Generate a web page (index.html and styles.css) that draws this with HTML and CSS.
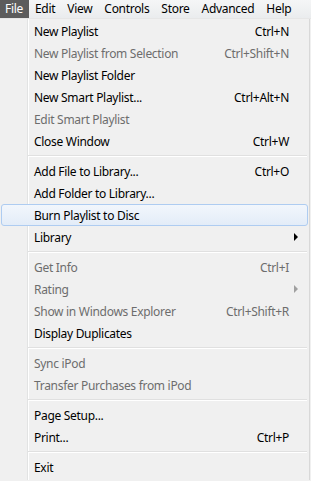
FILE: index.html
```html
<html>
<head>
<title>File menu</title>
<link rel="stylesheet" href="styles.css">
</head>
<body>
<div class="menubar">
  <span class="top open">File</span>
  <span class="top">Edit</span>
  <span class="top">View</span>
  <span class="top">Controls</span>
  <span class="top">Store</span>
  <span class="top">Advanced</span>
  <span class="top">Help</span>
</div>

<div class="menu">
  <div class="item"><span>New Playlist</span><span>Ctrl+N</span></div>
  <div class="item off"><span>New Playlist from Selection</span><span>Ctrl+Shift+N</span></div>
  <div class="item"><span>New Playlist Folder</span></div>
  <div class="item"><span>New Smart Playlist...</span><span>Ctrl+Alt+N</span></div>
  <div class="item off"><span>Edit Smart Playlist</span></div>
  <div class="item"><span>Close Window</span><span>Ctrl+W</span></div>
  <div class="sep"></div>
  <div class="item"><span>Add File to Library...</span><span>Ctrl+O</span></div>
  <div class="item"><span>Add Folder to Library...</span></div>
  <div class="item hot"><span>Burn Playlist to Disc</span></div>
  <div class="item sub"><span>Library</span></div>
  <div class="sep"></div>
  <div class="item off"><span>Get Info</span><span>Ctrl+I</span></div>
  <div class="item off sub"><span>Rating</span></div>
  <div class="item off"><span>Show in Windows Explorer</span><span>Ctrl+Shift+R</span></div>
  <div class="item"><span>Display Duplicates</span></div>
  <div class="sep"></div>
  <div class="item off"><span>Sync iPod</span></div>
  <div class="item off"><span>Transfer Purchases from iPod</span></div>
  <div class="sep"></div>
  <div class="item"><span>Page Setup...</span></div>
  <div class="item"><span>Print...</span><span>Ctrl+P</span></div>
  <div class="sep"></div>
  <div class="item"><span>Exit</span></div>
</div>
</body>
</html>
```

FILE: styles.css
```css
body {
  margin: 0;
  font-family: 'Noto Sans', sans-serif;
  font-size: 12px;
  letter-spacing: -0.3px;
  color: #000;
  background: #f0f0f0;
}
.menubar {
  display: flex;
  height: 18px;
  line-height: 18px;
  background: linear-gradient(#f5f6f7, #eaecee);
  border-bottom: 1px solid #e6e6e6;
}
.top {
  padding: 0 6px;
}
.top.open {
  background: #5c5c5c;
  color: #fff;
  padding: 0 6px 0 5px;
}
.menu {
  width: 309px;
  padding: 1px 0 2px;
  border-right: 1px solid #d8d8d8;
  background: linear-gradient(to right, #f0f0f0 27px, #e2e3e3 27px, #e2e3e3 28px, #fff 28px, #fff 29px, #f0f0f0 29px);
}
.item {
  display: flex;
  justify-content: space-between;
  align-items: center;
  height: 22px;
  padding: 0 18px 0 33px;
  margin: 0 2px 0 1px;
  position: relative;
}
.item.off {
  color: #6d6d6d;
}
.item.hot {
  margin: 0 1px 0 1px;
  padding-right: 19px;
  border: 1px solid #aeccf1;
  border-radius: 3px;
  height: 20px;
  padding-left: 32px;
  background: linear-gradient(#f2f6fc, #e3ecf8);
}
.item.sub::after {
  content: "";
  position: absolute;
  right: 9px;
  top: 7px;
  border-left: 4px solid #000;
  border-top: 4px solid transparent;
  border-bottom: 4px solid transparent;
}
.item.off.sub::after {
  border-left-color: #a0a0a0;
}
.sep {
  margin: 3px 2px 3px 28px;
  border-top: 1px solid #e0e0e0;
  border-bottom: 1px solid #fff;
  height: 0;
}
```
